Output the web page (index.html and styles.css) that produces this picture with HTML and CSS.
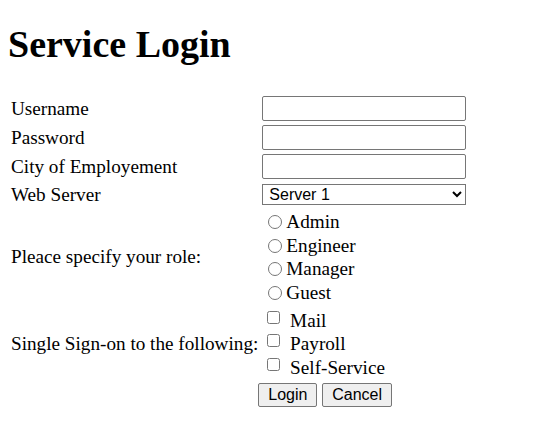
FILE: index.html
```html
<!DOCTYPE html>
<html lang="en">
<head>
  <meta charset="UTF-8">
  <title>Service Login</title>
  <link rel="stylesheet" href="styles.css">
</head>
<body>
  <h1>Service Login</h1>
  <form>
    <table class="login">
      <tr>
        <td>Username</td>
        <td><input type="text" class="field"></td>
      </tr>
      <tr>
        <td>Password</td>
        <td><input type="password" class="field"></td>
      </tr>
      <tr>
        <td>City of Employement</td>
        <td><input type="text" class="field"></td>
      </tr>
      <tr>
        <td>Web Server</td>
        <td>
          <select class="field select">
            <option>Server 1</option>
            <option>Server 2</option>
          </select>
        </td>
      </tr>
      <tr>
        <td>Pleace specify your role:</td>
        <td>
          <div class="opt radio"><input type="radio" name="role">Admin</div>
          <div class="opt radio"><input type="radio" name="role">Engineer</div>
          <div class="opt radio"><input type="radio" name="role">Manager</div>
          <div class="opt radio"><input type="radio" name="role">Guest</div>
        </td>
      </tr>
      <tr>
        <td>Single Sign-on to the following:</td>
        <td>
          <div class="opt check"><input type="checkbox"> Mail</div>
          <div class="opt check"><input type="checkbox"> Payroll</div>
          <div class="opt check"><input type="checkbox"> Self-Service</div>
        </td>
      </tr>
      <tr>
        <td></td>
        <td class="actions">
          <button type="button" class="btn">Login</button>
          <button type="button" class="btn">Cancel</button>
        </td>
      </tr>
    </table>
  </form>
</body>
</html>
```

FILE: styles.css
```css
body {
  margin: 8px;
  font-family: "Liberation Serif", "Times New Roman", serif;
  font-size: 19.2px;
  color: #000;
  background: #fff;
}
h1 {
  font-size: 38px;
  margin: 14px 0 27px;
}
.login {
  border-spacing: 2px;
}
.login td {
  padding: 1px;
}
.field {
  box-sizing: border-box;
  width: 204px;
  height: 25px;
  margin: 0;
  font-family: "Liberation Sans", Arial, sans-serif;
  font-size: 16px;
  border: 1px solid #767676;
  border-radius: 2px;
}
.select {
  height: 21px;
  margin: 1px 0;
  padding: 0 2px;
  background: #fff;
  border-radius: 0;
}
.opt {
  height: 23.7px;
  line-height: 23.7px;
}
.check {
  height: 23.4px;
  line-height: 23.4px;
}
.radio input {
  width: 14px;
  height: 14px;
  margin: 0 4px 0 6px;
  vertical-align: -1px;
}
.check input {
  width: 13px;
  height: 13px;
  margin: 0 5px 0 5px;
  vertical-align: 3px;
}
.actions {
  padding: 0 1px 2px 0;
}
.btn {
  box-sizing: border-box;
  height: 24px;
  font-family: "Liberation Sans", Arial, sans-serif;
  font-size: 16px;
  padding: 0 9px;
  margin: 0 0 0 -4px;
  border: 1px solid #767676;
  border-radius: 2px;
  background: #efefef;
}
.btn + .btn {
  margin-left: 0;
}
```
